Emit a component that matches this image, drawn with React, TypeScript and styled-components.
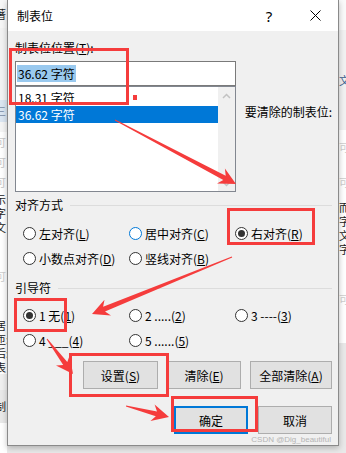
import styled, { createGlobalStyle } from "styled-components";

const GlobalStyle = createGlobalStyle`
  html, body {
    margin: 0;
    padding: 0;
    background: #e9e9e9;
  }
  body {
    font-family: "Noto Sans CJK SC", "Noto Sans", sans-serif;
    font-size: 12px;
    color: #000;
  }
`;

const Screen = styled.div`
  position: relative;
  width: 346px;
  height: 453px;
  overflow: hidden;
  display: flex;
  background: #e9e9e9;
`;

// slivers of the Word document behind the dialog
const DocStrip = styled.div<{ $side: "left" | "right" }>`
  width: ${(p) => (p.$side === "left" ? 7 : 8)}px;
  flex: none;
  display: flex;
  flex-direction: column;
  overflow: hidden;
  background: #fff;
  text-indent: ${(p) => (p.$side === "left" ? -5 : 0)}px;
`;

const StripPart = styled.div<{ $h: number; $bg?: string; $color?: string }>`
  height: ${(p) => p.$h}px;
  flex: none;
  background: ${(p) => p.$bg ?? "transparent"};
  color: ${(p) => p.$color ?? "#222"};
  font-size: 11px;
  line-height: ${(p) => p.$h}px;
  white-space: nowrap;
  overflow: hidden;
`;

const Dialog = styled.div`
  width: 332px;
  height: 446px;
  flex: none;
  box-sizing: border-box;
  border: 1px solid #8a8a8a;
  border-top: none;
  background: #f0f0f0;
  display: flex;
  flex-direction: column;
  box-shadow: 0 2px 6px rgba(0, 0, 0, 0.25);
  z-index: 1;
`;

const TitleBar = styled.div`
  height: 31px;
  flex: none;
  background: #fff;
  display: flex;
  align-items: center;
  padding-left: 9px;
`;

const Title = styled.div`
  flex: 1;
  line-height: 16px;
`;

const TitleButton = styled.div`
  width: 46px;
  height: 31px;
  display: flex;
  align-items: center;
  justify-content: center;
  font-family: "Noto Sans", sans-serif;
  font-size: 15px;
`;

const Body = styled.div`
  flex: 1;
  padding: 9px 6px 0 7px;
  display: flex;
  flex-direction: column;
`;

const TopArea = styled.div`
  display: flex;
`;

const PositionColumn = styled.div`
  width: 221px;
  display: flex;
  flex-direction: column;
`;

const FieldLabel = styled.div`
  line-height: 16px;
  white-space: nowrap;
`;

const TextBox = styled.div`
  margin-top: 5px;
  height: 25px;
  box-sizing: border-box;
  border: 1px solid #7a7a7a;
  background: #fff;
  display: flex;
  align-items: center;
  padding-left: 1px;
`;

const Highlight = styled.span`
  background: #99c9ef;
  line-height: 17px;
  padding: 0 1px;
`;

const ListBox = styled.div`
  height: 106px;
  box-sizing: border-box;
  border: 1px solid #828790;
  background: #fff;
  display: flex;
`;

const ListItems = styled.div`
  flex: 1;
  padding-top: 2px;
`;

const ListItem = styled.div<{ $selected?: boolean }>`
  height: 17px;
  line-height: 17px;
  padding-left: 2px;
  background: ${(p) => (p.$selected ? "#0078d7" : "transparent")};
  color: ${(p) => (p.$selected ? "#fff" : "#000")};
`;

const ScrollTrack = styled.div`
  width: 17px;
  background: #f0f0f0;
  display: flex;
  flex-direction: column;
  justify-content: space-between;
  align-items: center;
  padding: 6px 0 4px;
`;

const ClearLabel = styled.div`
  margin: 64px 0 0 9px;
  line-height: 16px;
  white-space: nowrap;
`;

const GroupTitle = styled.div<{ $top: number }>`
  margin-top: ${(p) => p.$top}px;
  display: flex;
  align-items: center;
  gap: 7px;
  line-height: 16px;
  white-space: nowrap;
  &::after {
    content: "";
    flex: 1;
    height: 1px;
    background: #dcdcdc;
  }
`;

const RadioGrid = styled.div<{ $top: number }>`
  margin-top: ${(p) => p.$top}px;
  display: grid;
  grid-template-columns: 106px 106px 106px;
  grid-auto-rows: 25px;
  padding-left: 8px;
`;

const RadioOption = styled.div`
  display: flex;
  align-items: center;
  gap: 3px;
  white-space: nowrap;
`;

const RadioCircle = styled.span<{ $checked?: boolean; $focus?: boolean }>`
  width: 13px;
  height: 13px;
  box-sizing: border-box;
  border-radius: 50%;
  border: 1px solid ${(p) => (p.$focus ? "#0078d7" : "#333")};
  background: #fff;
  display: flex;
  align-items: center;
  justify-content: center;
  &::after {
    content: "";
    display: ${(p) => (p.$checked ? "block" : "none")};
    width: 7px;
    height: 7px;
    border-radius: 50%;
    background: #333;
  }
`;

const ButtonRow = styled.div<{ $top: number; $gap: number }>`
  margin-top: ${(p) => p.$top}px;
  display: flex;
  justify-content: flex-end;
  gap: ${(p) => p.$gap}px;
`;

const Button = styled.div<{ $w: number; $default?: boolean }>`
  width: ${(p) => p.$w}px;
  height: 28px;
  box-sizing: border-box;
  border: ${(p) => (p.$default ? "2px solid #0078d7" : "1px solid #adadad")};
  background: #e1e1e1;
  display: flex;
  align-items: center;
  justify-content: center;
  white-space: nowrap;
`;

const Watermark = styled.div`
  margin-top: 1px;
  text-align: right;
  font-family: "Liberation Sans", sans-serif;
  font-size: 8px;
  line-height: 10px;
  color: #b4b4b4;
  padding-right: 1px;
`;

const RedBox = styled.div<{ $x: number; $y: number; $w: number; $h: number }>`
  position: absolute;
  left: ${(p) => p.$x}px;
  top: ${(p) => p.$y}px;
  width: ${(p) => p.$w}px;
  height: ${(p) => p.$h}px;
  box-sizing: border-box;
  border: 3px solid #f53c3c;
  z-index: 2;
`;

const RedDot = styled.div`
  position: absolute;
  left: 133px;
  top: 95px;
  width: 4px;
  height: 5px;
  background: #f53c3c;
  z-index: 2;
`;

const ArrowLayer = styled.svg`
  position: absolute;
  left: 0;
  top: 0;
  z-index: 3;
  pointer-events: none;
`;

function arrowPoints(x1: number, y1: number, x2: number, y2: number) {
  const head = 17;
  const headW = 17;
  const neckW = 5;
  const tailW = 1;
  const len = Math.hypot(x2 - x1, y2 - y1);
  const ux = (x2 - x1) / len;
  const uy = (y2 - y1) / len;
  const px = -uy;
  const py = ux;
  const bx = x2 - ux * head;
  const by = y2 - uy * head;
  const nx = x2 - ux * (head - 4);
  const ny = y2 - uy * (head - 4);
  const pts = [
    [x1 + (px * tailW) / 2, y1 + (py * tailW) / 2],
    [nx + (px * neckW) / 2, ny + (py * neckW) / 2],
    [bx + (px * headW) / 2, by + (py * headW) / 2],
    [x2, y2],
    [bx - (px * headW) / 2, by - (py * headW) / 2],
    [nx - (px * neckW) / 2, ny - (py * neckW) / 2],
    [x1 - (px * tailW) / 2, y1 - (py * tailW) / 2],
  ];
  return pts.map((p) => p.map((v) => v.toFixed(1)).join(",")).join(" ");
}

const arrows = [
  [115, 120, 236, 184],
  [232, 257, 92, 314],
  [47, 339, 73, 374],
  [126, 406, 169, 417],
];

function Chevron({ up }: { up?: boolean }) {
  return (
    <svg width="9" height="6" viewBox="0 0 9 6">
      <path
        d={up ? "M1 5 L4.5 1.5 L8 5" : "M1 1 L4.5 4.5 L8 1"}
        fill="none"
        stroke="#c2c2c2"
        strokeWidth="1.5"
      />
    </svg>
  );
}

function CloseIcon() {
  return (
    <svg width="11" height="11" viewBox="0 0 11 11">
      <path d="M0.5 0.5 L10.5 10.5 M10.5 0.5 L0.5 10.5" stroke="#000" strokeWidth="1" />
    </svg>
  );
}

const alignOptions = [
  { label: "左对齐", key: "L" },
  { label: "居中对齐", key: "C", focus: true },
  { label: "右对齐", key: "R", checked: true },
  { label: "小数点对齐", key: "D" },
  { label: "竖线对齐", key: "B" },
];

const leaderOptions = [
  { label: "1 无", key: "1", checked: true },
  { label: "2 .....", key: "2" },
  { label: "3 ----", key: "3" },
  { label: "4 ___", key: "4" },
  { label: "5 ......", key: "5" },
];

export default function App() {
  return (
    <Screen>
      <GlobalStyle />
      <DocStrip $side="left">
        <StripPart $h={28} $bg="#f7f7f7">著</StripPart>
        <StripPart $h={72} $bg="#f3f3f3" />
        <StripPart $h={22} $bg="#dbe6f2" $color="#7a8ea6">三</StripPart>
        <StripPart $h={10} $bg="#f5f5f5" />
        <StripPart $h={20} $color="#c8c8c8">可</StripPart>
        <StripPart $h={20} $color="#c8c8c8">可</StripPart>
        <StripPart $h={20} $color="#c8c8c8">可</StripPart>
        <StripPart $h={14}>示</StripPart>
        <StripPart $h={14}>字</StripPart>
        <StripPart $h={14}>文</StripPart>
        <StripPart $h={84} $color="#cfcfcf">可</StripPart>
        <StripPart $h={14}>居</StripPart>
        <StripPart $h={14}>匝:</StripPart>
        <StripPart $h={14}>后:</StripPart>
        <StripPart $h={14}>表</StripPart>
        <StripPart $h={16} $bg="#f0f0f0" />
        <StripPart $h={33} $bg="#e9e9e9">制</StripPart>
      </DocStrip>

      <Dialog>
        <TitleBar>
          <Title>制表位</Title>
          <TitleButton>?</TitleButton>
          <TitleButton>
            <CloseIcon />
          </TitleButton>
        </TitleBar>
        <Body>
          <TopArea>
            <PositionColumn>
              <FieldLabel>
                制表位位置(<u>T</u>):
              </FieldLabel>
              <TextBox>
                <Highlight>36.62 字符</Highlight>
              </TextBox>
              <ListBox>
                <ListItems>
                  <ListItem>18.31 字符</ListItem>
                  <ListItem $selected>36.62 字符</ListItem>
                </ListItems>
                <ScrollTrack>
                  <Chevron up />
                  <Chevron />
                </ScrollTrack>
              </ListBox>
            </PositionColumn>
            <ClearLabel>要清除的制表位:</ClearLabel>
          </TopArea>

          <GroupTitle $top={5}>对齐方式</GroupTitle>
          <RadioGrid $top={8}>
            {alignOptions.map((o) => (
              <RadioOption key={o.key}>
                <RadioCircle $checked={o.checked} $focus={o.focus} />
                <span>
                  {o.label}(<u>{o.key}</u>)
                </span>
              </RadioOption>
            ))}
          </RadioGrid>

          <GroupTitle $top={9}>引导符</GroupTitle>
          <RadioGrid $top={7}>
            {leaderOptions.map((o) => (
              <RadioOption key={o.key}>
                <RadioCircle $checked={o.checked} />
                <span>
                  {o.label}(<u>{o.key}</u>)
                </span>
              </RadioOption>
            ))}
          </RadioGrid>

          <ButtonRow $top={8} $gap={9}>
            <Button $w={75}>
              设置(<u>S</u>)
            </Button>
            <Button $w={74}>
              清除(<u>E</u>)
            </Button>
            <Button $w={82}>
              全部清除(<u>A</u>)
            </Button>
          </ButtonRow>
          <ButtonRow $top={17} $gap={10}>
            <Button $w={74} $default>
              确定
            </Button>
            <Button $w={74}>取消</Button>
          </ButtonRow>
          <Watermark>CSDN @Dig_beautiful</Watermark>
        </Body>
      </Dialog>

      <DocStrip $side="right">
        <StripPart $h={30} $bg="#fafafa" />
        <StripPart $h={100} $bg="#f2f2f2" $color="#3b5f8f">
          文
        </StripPart>
        <StripPart $h={35} $color="#cfcfcf">可</StripPart>
        <StripPart $h={35} $color="#cfcfcf">可</StripPart>
        <StripPart $h={14}>而</StripPart>
        <StripPart $h={14}>字</StripPart>
        <StripPart $h={14}>文</StripPart>
        <StripPart $h={14}>字</StripPart>
        <StripPart $h={87} $color="#cfcfcf">可</StripPart>
        <StripPart $h={110} $bg="#e9e9e9" />
      </DocStrip>

      <RedBox $x={9} $y={48} $w={120} $h={57} />
      <RedDot />
      <RedBox $x={227} $y={208} $w={88} $h={37} />
      <RedBox $x={14} $y={298} $w={53} $h={34} />
      <RedBox $x={69} $y={353} $w={100} $h={44} />
      <RedBox $x={171} $y={396} $w={87} $h={36} />
      <ArrowLayer width="346" height="453" viewBox="0 0 346 453">
        {arrows.map(([x1, y1, x2, y2], i) => (
          <polygon key={i} points={arrowPoints(x1, y1, x2, y2)} fill="#f53c3c" />
        ))}
      </ArrowLayer>
    </Screen>
  );
}
